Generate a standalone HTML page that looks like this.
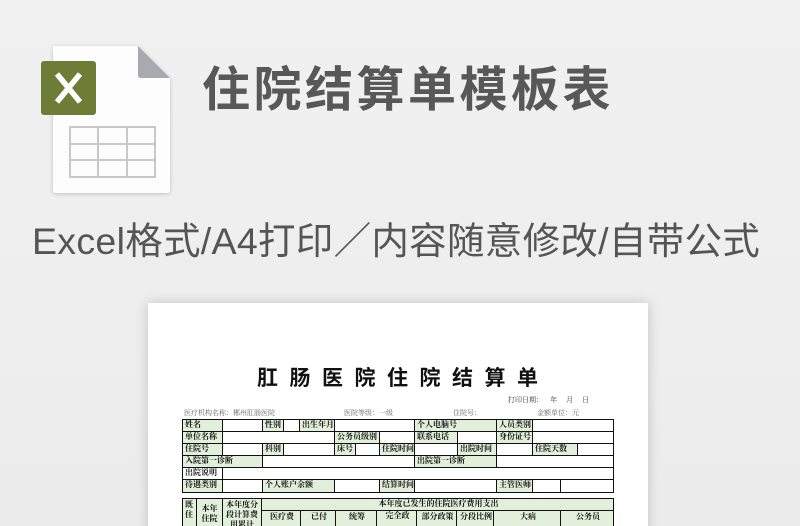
<!DOCTYPE html>
<html><head><meta charset="utf-8"><style>
*{margin:0;padding:0;box-sizing:border-box}
html,body{width:800px;height:526px;overflow:hidden}
body{background:linear-gradient(#f1f1f1,#ececec);position:relative;font-family:"Liberation Sans","Noto Sans CJK SC",sans-serif}
.a{position:absolute}
.h1{left:202px;top:50px;font-size:48px;font-weight:bold;color:#585858;letter-spacing:3.5px;white-space:nowrap}
.h2{left:32px;top:210px;font-size:37.5px;color:#555;white-space:nowrap;letter-spacing:0.3px}
.paper{left:148px;top:303px;width:500px;height:240px;background:#fff;box-shadow:0 0 12px rgba(0,0,0,.18)}
.c{position:absolute;border:1px solid #111;font-size:8px;font-weight:bold;line-height:10px;padding-left:2px;white-space:nowrap;overflow:hidden;font-family:"Noto Serif CJK SC","Noto Sans CJK SC",serif;color:#111}
.g{background:#e2efda}
.t{position:absolute;font-size:7px;color:#666;white-space:nowrap;font-family:"Noto Serif CJK SC",serif}
</style></head><body>
<svg class="a" style="left:38px;top:42px" width="140" height="156" viewBox="38 42 140 156">
<defs><filter id="s"><feDropShadow dx="0" dy="1" stdDeviation="2" flood-opacity=".2"/></filter></defs>
<path d="M53 46 H138 L170 78 V190 Q170 193 167 193 H56 Q53 193 53 190 Z" fill="#fdfdfd" filter="url(#s)"/>
<path d="M138 46 L170 78 H141 Q138 78 138 75 Z" fill="#a9a9b0"/>
<rect x="41" y="61" width="55" height="54" rx="3" fill="#6d7d35"/>
<path d="M57 74 L80 102 M80 74 L57 102" stroke="#fff" stroke-width="5.5"/>
<g fill="none" stroke="#c8c8c8" stroke-width="2"><rect x="70" y="127" width="85" height="50"/><path d="M70 144H155M70 160H155M98 127V177M127 127V177"/></g>
</svg>
<div class="a h1">住院结算单模板表</div>
<div class="a h2">Excel格式/A4打印／内容随意修改/自带公式</div>
<div class="a paper"></div>
<div class="a" style="left:257px;top:362px;font-size:21px;font-weight:bold;letter-spacing:11.5px;font-family:'Noto Sans CJK SC',sans-serif;color:#111">肛肠医院住院结算单</div>
<div class="t" style="left:508px;top:395px;color:#333">打印日期：&nbsp;&nbsp;&nbsp;&nbsp;年&nbsp;&nbsp;&nbsp;&nbsp;&nbsp;月&nbsp;&nbsp;&nbsp;&nbsp;&nbsp;日</div>
<div class="t" style="left:184px;top:408px">医疗机构名称：郴州肛肠医院</div>
<div class="t" style="left:344px;top:408px">医院等级：一级</div>
<div class="t" style="left:453px;top:408px">住院号：</div>
<div class="t" style="left:537px;top:408px">金额单位：元</div>
<div class="c g" style="left:182px;top:419px;width:41px;height:13px">姓名</div>
<div class="c" style="left:222px;top:419px;width:41px;height:13px"></div>
<div class="c g" style="left:262px;top:419px;width:22px;height:13px">性别</div>
<div class="c" style="left:283px;top:419px;width:17px;height:13px"></div>
<div class="c g" style="left:299px;top:419px;width:36px;height:13px">出生年月</div>
<div class="c" style="left:334px;top:419px;width:81px;height:13px"></div>
<div class="c g" style="left:414px;top:419px;width:83px;height:13px">个人电脑号</div>
<div class="c g" style="left:496px;top:419px;width:37px;height:13px">人员类别</div>
<div class="c" style="left:532px;top:419px;width:82px;height:13px"></div>
<div class="c g" style="left:182px;top:431px;width:41px;height:13px">单位名称</div>
<div class="c" style="left:222px;top:431px;width:113px;height:13px"></div>
<div class="c g" style="left:334px;top:431px;width:46px;height:13px">公务员级别</div>
<div class="c" style="left:379px;top:431px;width:36px;height:13px"></div>
<div class="c g" style="left:414px;top:431px;width:44px;height:13px">联系电话</div>
<div class="c" style="left:457px;top:431px;width:40px;height:13px"></div>
<div class="c g" style="left:496px;top:431px;width:37px;height:13px">身份证号</div>
<div class="c" style="left:532px;top:431px;width:82px;height:13px"></div>
<div class="c g" style="left:182px;top:443px;width:41px;height:13px">住院号</div>
<div class="c" style="left:222px;top:443px;width:41px;height:13px"></div>
<div class="c g" style="left:262px;top:443px;width:22px;height:13px">科别</div>
<div class="c" style="left:283px;top:443px;width:52px;height:13px"></div>
<div class="c g" style="left:334px;top:443px;width:22px;height:13px">床号</div>
<div class="c" style="left:355px;top:443px;width:25px;height:13px"></div>
<div class="c g" style="left:379px;top:443px;width:36px;height:13px">住院时间</div>
<div class="c" style="left:414px;top:443px;width:44px;height:13px"></div>
<div class="c g" style="left:457px;top:443px;width:40px;height:13px">出院时间</div>
<div class="c" style="left:496px;top:443px;width:37px;height:13px"></div>
<div class="c g" style="left:532px;top:443px;width:46px;height:13px">住院天数</div>
<div class="c" style="left:577px;top:443px;width:37px;height:13px"></div>
<div class="c g" style="left:182px;top:455px;width:81px;height:13px">入院第一诊断</div>
<div class="c" style="left:262px;top:455px;width:153px;height:13px"></div>
<div class="c g" style="left:414px;top:455px;width:83px;height:13px">出院第一诊断</div>
<div class="c" style="left:496px;top:455px;width:118px;height:13px"></div>
<div class="c" style="left:182px;top:467px;width:41px;height:13px">出院说明</div>
<div class="c" style="left:222px;top:467px;width:392px;height:13px"></div>
<div class="c g" style="left:182px;top:479px;width:41px;height:14px">待遇类别</div>
<div class="c" style="left:222px;top:479px;width:41px;height:14px"></div>
<div class="c g" style="left:262px;top:479px;width:73px;height:14px">个人账户余额</div>
<div class="c" style="left:334px;top:479px;width:46px;height:14px"></div>
<div class="c g" style="left:379px;top:479px;width:36px;height:14px">结算时间</div>
<div class="c" style="left:414px;top:479px;width:83px;height:14px"></div>
<div class="c g" style="left:496px;top:479px;width:37px;height:14px">主管医师</div>
<div class="c" style="left:532px;top:479px;width:29px;height:14px"></div>
<div class="c" style="left:560px;top:479px;width:54px;height:14px"></div>
<div class="c g" style="left:182px;top:498px;width:15px;height:40px;line-height:10px;padding:1px 2px;white-space:normal">既住</div>
<div class="c g" style="left:196px;top:498px;width:27px;height:40px;white-space:normal;padding:5px 2px 0;text-align:center">本年住院</div>
<div class="c g" style="left:222px;top:498px;width:40px;height:40px;white-space:normal;padding:1px 2px;text-align:center">本年度分段计算费用累计</div>
<div class="c g" style="left:261px;top:498px;width:353px;height:13px;text-align:center">本年度已发生的住院医疗费用支出</div>
<div class="c g" style="left:261px;top:510px;width:40px;height:30px;text-align:center;padding-top:1px">医疗费</div>
<div class="c g" style="left:300px;top:510px;width:36px;height:30px;text-align:center;padding-top:1px">已付</div>
<div class="c g" style="left:335px;top:510px;width:42px;height:30px;text-align:center;padding-top:1px">统筹</div>
<div class="c g" style="left:376px;top:510px;width:41px;height:30px;text-align:center;padding-top:0">完全政</div>
<div class="c g" style="left:416px;top:510px;width:41px;height:30px;text-align:center;padding-top:1px">部分政策</div>
<div class="c g" style="left:456px;top:510px;width:38px;height:30px;text-align:center;padding-top:1px">分段比例</div>
<div class="c g" style="left:493px;top:510px;width:68px;height:30px;text-align:center;padding-top:1px">大病</div>
<div class="c g" style="left:560px;top:510px;width:54px;height:30px;text-align:center;padding-top:1px">公务员</div>
</body></html>
